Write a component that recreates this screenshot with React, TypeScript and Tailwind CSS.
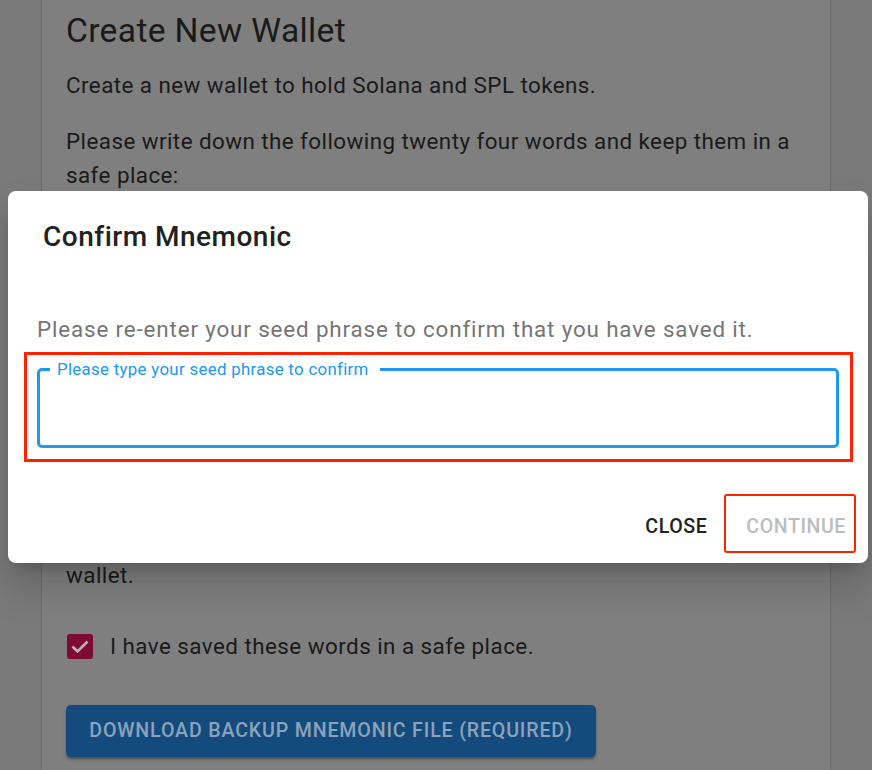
import React from "react";

export default function App() {
  return (
    <div className="relative w-[872px] h-[770px] overflow-hidden bg-[#7a7a7a] font-['Roboto',_'Liberation_Sans',_sans-serif]">
      {/* background card */}
      <div className="mx-[42px] h-full bg-[#7f7f7f] shadow-[0_0_2px_rgba(0,0,0,0.25)] px-[24px] pt-[9px] text-[#1a1a1a]">
        <h1 className="text-[33.6px] leading-[44.8px] font-normal tracking-[0.35px]">Create New Wallet</h1>
        <p className="mt-[15px] text-[22.4px] leading-[33.6px] tracking-[0.44px]">
          Create a new wallet to hold Solana and SPL tokens.
        </p>
        <p className="mt-[23px] text-[22.4px] leading-[33.6px] tracking-[0.44px]">
          Please write down the following twenty four words and keep them in a safe place:
        </p>
        <div className="h-[366px]" />
        <p className="text-[22.4px] leading-[33.6px] tracking-[0.44px]">wallet.</p>
        <div className="mt-[38px] flex items-center gap-[17px]">
          <svg width="26" height="26" viewBox="0 0 26 26" className="ml-[1px] shrink-0">
            <rect x="0" y="0" width="26" height="25" rx="3" fill="#7d0b35" />
            <polyline points="5.5,12.5 10.5,17.5 20.5,7.5" fill="none" stroke="#bdb3b7" strokeWidth="2.6" />
          </svg>
          <span className="text-[22.4px] leading-[33.6px] tracking-[0.46px]">I have saved these words in a safe place.</span>
        </div>
        <button className="mt-[41px] w-[530px] h-[52px] rounded-[5px] bg-[#144b7d] shadow-[0_3px_2px_-1px_rgba(0,0,0,0.25),0_2px_4px_rgba(0,0,0,0.2)] text-[#8ca3bb] text-[19.6px] font-medium uppercase tracking-[0.84px] flex items-center justify-center">
          Download backup mnemonic file (Required)
        </button>
      </div>

      {/* dialog */}
      <div className="absolute left-[8px] top-[191px] w-[860px] h-[372px] rounded-[8px] bg-white shadow-[0_11px_15px_-7px_rgba(0,0,0,0.2),0_24px_38px_3px_rgba(0,0,0,0.14)] flex flex-col">
        <h2 className="pl-[35px] pt-[24px] text-[28px] leading-[44.8px] font-medium tracking-[0.5px] text-[#212121]">Confirm Mnemonic</h2>
        <div className="px-[29px] mt-[53px]">
          <p className="text-[22.4px] leading-[33.6px] tracking-[0.85px] text-[#757575]">
            Please re-enter your seed phrase to confirm that you have saved it.
          </p>
          <div className="relative mt-[22px] h-[80px] rounded-[5px] border-[3px] border-[#2196f3]">
            <span className="absolute left-[10px] top-[-12px] bg-white pl-[7px] pr-[11px] text-[16.8px] leading-[20px] tracking-[0.33px] text-[#2196f3]">
              Please type your seed phrase to confirm
            </span>
          </div>
        </div>
        <div className="mt-auto pb-[11px] pr-[11px] flex justify-end gap-[17px]">
          <button className="px-[11px] py-[8px] text-[19.6px] leading-[34px] font-medium uppercase tracking-[0.56px] text-[#212121]">
            Close
          </button>
          <button className="px-[11px] py-[8px] text-[19.6px] leading-[34px] font-medium uppercase tracking-[0.56px] text-[#bdbdbd]">
            Continue
          </button>
        </div>

        {/* annotation boxes */}
        <div className="absolute left-[16px] top-[161px] w-[829px] h-[110px] border-[3px] border-[#ff2200]" />
        <div className="absolute left-[716px] top-[303px] w-[132px] h-[59px] rounded-[3px] border-[2px] border-[#ff2200]" />
      </div>
    </div>
  );
}
